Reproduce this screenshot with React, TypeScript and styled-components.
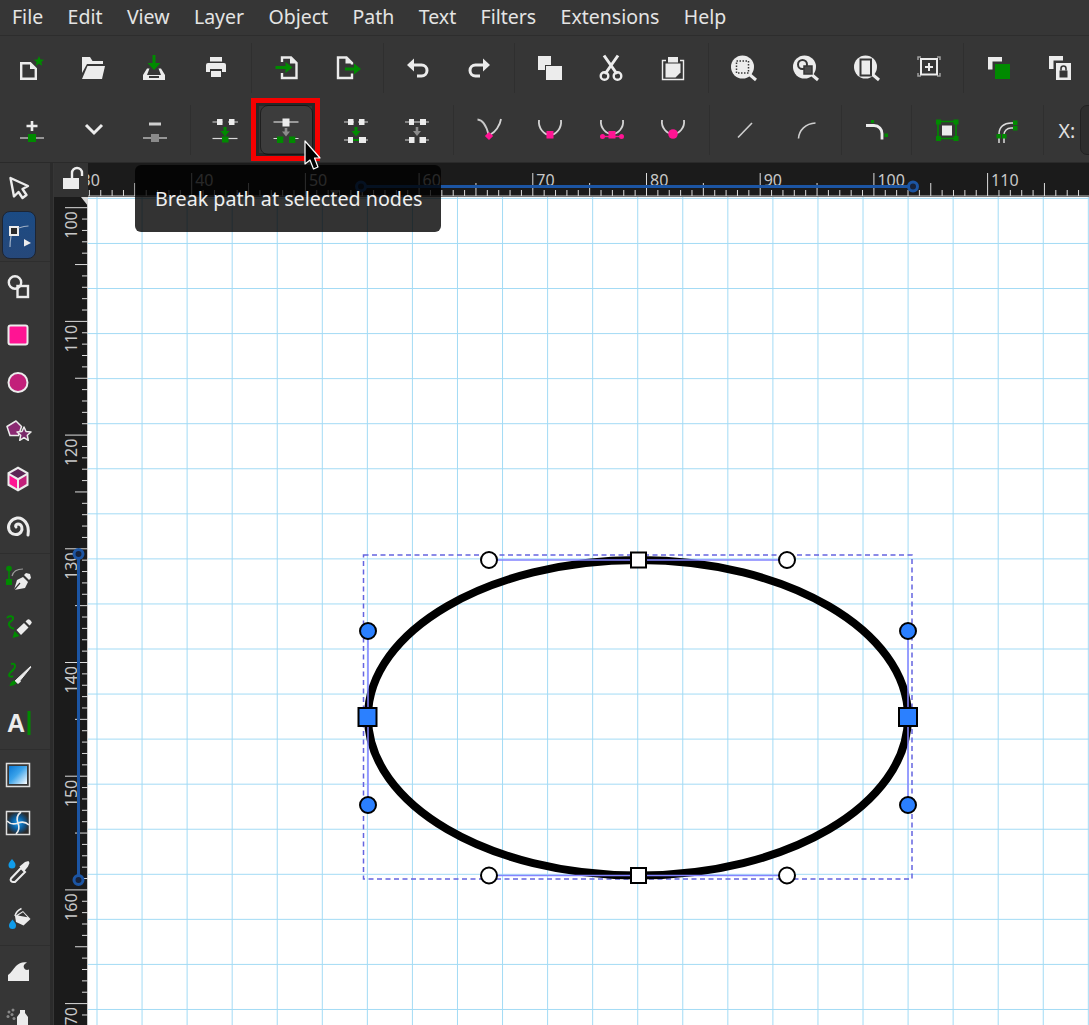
import React from "react";
import styled, { createGlobalStyle } from "styled-components";

const W = "#ececec";
const G = "#008a00";
const P = "#ff1493";

const GlobalStyle = createGlobalStyle`
  html, body {
    margin: 0;
    padding: 0;
    background: #363636;
    font-family: "Noto Sans", "Open Sans", sans-serif;
  }
`;

const Root = styled.div`
  position: relative;
  width: 1089px;
  height: 1025px;
  overflow: hidden;
  display: flex;
  flex-direction: column;
  background: #363636;
`;
const MenuBar = styled.div`
  display: flex;
  align-items: center;
  box-sizing: border-box;
  height: 36px;
  padding-bottom: 3px;
  border-bottom: 1px solid #2d2d2d;
`;
const MenuItem = styled.div`
  padding: 0 12.4px 0 12px;
  font-size: 19.5px;
  color: #e4e4e4;
  white-space: nowrap;
`;
const ToolRow = styled.div<{ $h: number; $pt?: number; $pl: number }>`
  display: flex;
  align-items: center;
  box-sizing: border-box;
  height: ${(p) => p.$h}px;
  padding-top: ${(p) => p.$pt ?? 0}px;
  padding-left: ${(p) => p.$pl}px;
  flex: none;
`;
const ToolButton = styled.div<{ $hover?: boolean }>`
  flex: none;
  display: flex;
  align-items: center;
  justify-content: center;
  box-sizing: border-box;
  width: 53.5px;
  height: 50px;
  margin: 0 4px;
  border-radius: 8px;
  border: 1px solid ${(p) => (p.$hover ? "#1f1f1f" : "transparent")};
  background: ${(p) => (p.$hover ? "#3c3c3c" : "transparent")};
`;
const Sep = styled.div<{ $w: number; $hidden?: boolean }>`
  flex: none;
  width: ${(p) => p.$w}px;
  height: 50px;
  display: flex;
  justify-content: center;
  &::after {
    content: "";
    width: 1px;
    height: 100%;
    background: ${(p) => (p.$hidden ? "transparent" : "#2f2f2f")};
  }
`;
const Glyph = styled.svg`
  display: block;
  width: 32px;
  height: 32px;
  flex: none;
  overflow: visible;
`;
const CoordLabel = styled.div`
  flex: none;
  font-size: 19.5px;
  color: #e0e0e0;
  margin-left: 11px;
  width: 21.5px;
`;
const CoordInput = styled.div`
  flex: none;
  box-sizing: border-box;
  width: 60px;
  height: 50px;
  border: 1px solid #222;
  border-radius: 7px;
  background: #2e2e2e;
`;
const Body = styled.div`
  flex: 1;
  min-height: 0;
  display: flex;
  border-top: 1px solid #2a2a2a;
`;
const ToolBox = styled.div`
  flex: none;
  width: 50px;
  display: flex;
  flex-direction: column;
  align-items: flex-end;
  border-right: 3px solid #2b2b2b;
  margin-right: 1px;
  overflow: hidden;
`;
const BoxButton = styled.div<{ $active?: boolean }>`
  flex: none;
  box-sizing: border-box;
  width: 34px;
  height: 48px;
  margin-right: 14px;
  display: flex;
  align-items: center;
  justify-content: center;
  border-radius: 8px;
  border: 1px solid ${(p) => (p.$active ? "#1d2533" : "transparent")};
  background: ${(p) => (p.$active ? "linear-gradient(#1b4b84, #26487a)" : "transparent")};
  svg {
    margin-left: -2px;
  }
`;
const BoxSep = styled.div`
  flex: none;
  width: 100%;
  height: 1px;
  margin: 1.5px 0;
  background: #2e2e2e;
`;
const Stage = styled.div`
  flex: 1;
  min-width: 0;
  display: grid;
  grid-template-columns: 34px 1fr;
  grid-template-rows: 34px 1fr;
`;
const LockCell = styled.div`
  background: #333;
  display: flex;
  align-items: center;
  justify-content: center;
`;
const Drawing = styled.svg`
  display: block;
  width: 100%;
  height: 100%;
`;
const RulerFrame = styled.div`
  background: #1b1b1b;
  overflow: hidden;
`;
const Canvas = styled.div`
  background: #fff;
  overflow: hidden;
`;
const RedBox = styled.div`
  position: absolute;
  left: 251px;
  top: 98px;
  width: 69px;
  height: 63px;
  box-sizing: border-box;
  border: 5px solid #f60000;
  box-shadow: inset 0 0 0 3px rgba(0, 0, 0, 0.25);
`;
const Tooltip = styled.div`
  position: absolute;
  left: 135px;
  top: 165px;
  width: 306px;
  height: 67px;
  box-sizing: border-box;
  padding-left: 20px;
  display: flex;
  align-items: center;
  border-radius: 6px;
  background: rgba(0, 0, 0, 0.8);
  color: #efefef;
  font-size: 19.7px;
  white-space: nowrap;
`;
const Cursor = styled.svg`
  position: absolute;
  left: 300px;
  top: 138px;
  width: 30px;
  height: 36px;
`;

const I = (p: { children: React.ReactNode }) => <Glyph viewBox="0 0 32 32">{p.children}</Glyph>;

const line = { fill: "none", stroke: W, strokeWidth: 2.4 } as const;

const topIcons = [
  <I>
    <path d="M6.2 11.2h9l5.6 5.6v10H6.2z" {...line} />
    <path d="M15 11v6h6z" fill={W} />
    <path d="M24 4l1.5 3.4 3.6.3-2.7 2.4.8 3.6-3.2-1.9-3.2 1.9.8-3.6-2.7-2.4 3.6-.3z" fill={G} />
  </I>,
  <I>
    <path d="M5 5h8l2.5 4H26v3H10l-5 9z" fill={W} />
    <path d="M10.5 14H28l-3 13H5z" fill={W} />
  </I>,
  <I>
    <path d="M14.5 3h3v9h-3z" fill={G} />
    <path d="M9.5 11h13L16 18z" fill={G} />
    <path d="M9 16.5h2.5L9 23h14l-2.5-6.5H23L27 23v5H5v-5z" fill={W} />
    <path d="M11 24h10v2H11z" fill="#363636" />
  </I>,
  <I>
    <path d="M10 5h12v4.5H10z" fill={W} />
    <path d="M8 11h16a2 2 0 0 1 2 2v7h-4v-3H10v3H6v-7a2 2 0 0 1 2-2z" fill={W} />
    <path d="M11 19h10v6H11z" fill={W} />
  </I>,
  <I>
    <path d="M11 10V5.5h9l5.5 5.5v15H11v-5" {...line} />
    <path d="M19 5v6.5h6.5z" fill={W} />
    <path d="M4.5 14h11v3h-11z" fill={G} />
    <path d="M14.5 10l7 5.5-7 5.5z" fill={G} />
  </I>,
  <I>
    <path d="M20 12.5V11l-5.5-5.5H6V26h14v-4.5" {...line} />
    <path d="M13.5 5v6.5H20z" fill={W} />
    <path d="M13 15.5h11v3H13z" fill={G} />
    <path d="M22 11.5l7 5.5-7 5.5z" fill={G} />
  </I>,
  <I>
    <path d="M9 13h10.5a5.5 5.5 0 0 1 0 11H15" fill="none" stroke={W} strokeWidth="3" />
    <path d="M12 6.5v13L5 13z" fill={W} />
  </I>,
  <I>
    <path d="M23 13H12.5a5.5 5.5 0 0 0 0 11H17" fill="none" stroke={W} strokeWidth="3" />
    <path d="M20 6.5v13l7-6.5z" fill={W} />
  </I>,
  <I>
    <path d="M4 4h13v9h-6v5H4z" fill={W} />
    <path d="M12 14h16v14H12z" fill={W} />
  </I>,
  <I>
    <path d="M9 3.5L22 22M23 3.5L10 22" stroke={W} strokeWidth="3" fill="none" />
    <circle cx="9.5" cy="24" r="3.8" {...line} />
    <circle cx="22.5" cy="24" r="3.8" {...line} />
  </I>,
  <I>
    <path d="M9 8.5H5.5v19h21v-19H23" fill="none" stroke={W} strokeWidth="1.4" />
    <path d="M11 5h10v5.5H11z" fill={W} />
    <path d="M8.5 11.5H23.5v9l-5 5h-10z" fill={W} />
  </I>,
  <I>
    <circle cx="14.5" cy="15" r="11.5" fill={W} />
    <path d="M21 22l7 6" stroke={W} strokeWidth="3" />
    <rect x="8.5" y="9" width="12" height="12" fill="none" stroke="#363636" strokeWidth="1.5" strokeDasharray="1.5 1.5" />
  </I>,
  <I>
    <circle cx="14.5" cy="15" r="11.5" fill={W} />
    <path d="M21 22l7 6" stroke={W} strokeWidth="3" />
    <circle cx="12.5" cy="12.5" r="4.5" fill={W} stroke="#363636" strokeWidth="2" />
    <rect x="14" y="14" width="8" height="8" fill="#4a4a4a" stroke="#363636" strokeWidth="1.5" />
  </I>,
  <I>
    <circle cx="14.5" cy="15" r="11.5" fill={W} />
    <path d="M21 22l7 6" stroke={W} strokeWidth="3" />
    <rect x="9.5" y="7.5" width="10.5" height="16" fill={W} stroke="#363636" strokeWidth="2" />
  </I>,
  <I>
    <path d="M8 8H5v3M24 8h3v3M8 27H5v-3M24 27h3v-3" transform="translate(0 -3)" fill="none" stroke="#a0a0a0" strokeWidth="1.5" />
    <rect x="8" y="7" width="16" height="15.5" fill="none" stroke={W} strokeWidth="2" />
    <path d="M12 15h8M16 11v8" stroke={W} strokeWidth="2" />
  </I>,
  <I>
    <path d="M6 5h14v4.5h-9.5v8H6z" fill={W} />
    <path d="M13 12h15v15H13z" fill={G} />
  </I>,
  <I>
    <path d="M5 4h14v4.5h-9.5V17H5z" fill={W} />
    <path d="M12 11h15v17H12z" fill={W} />
    <path d="M15.5 18.5h8v7h-8z" fill="#363636" />
    <path d="M17 18.5v-2a2.5 2.5 0 0 1 5 0v2" fill="none" stroke="#363636" strokeWidth="1.6" />
  </I>,
];

const thin = { fill: "none", stroke: "#d8d8d8", strokeWidth: 1.2 } as const;
const arc = { fill: "none", stroke: "#d4d4d4", strokeWidth: 1.8 } as const;
const cap = (x: number, y: number, w = 6, h = 6, c = W) => <rect x={x} y={y} width={w} height={h} fill={c} />;

const nodeIcons = [
  <I>
    <path d="M4 24h24" {...thin} />
    <path d="M16 7v10M10.5 12h11" stroke={W} strokeWidth="2.6" />
    {cap(12, 20, 8, 8, G)}
  </I>,
  <I>
    <path d="M8 11l8 8 8-8" fill="none" stroke={W} strokeWidth="3" />
  </I>,
  <I>
    <path d="M4 24h24" {...thin} />
    <path d="M10 10h12" stroke="#cfcfcf" strokeWidth="3" />
    {cap(12, 20, 8, 8, "#8a8a8a")}
  </I>,
  <I>
    <path d="M3.5 8h10M19 8h10" {...thin} />
    {cap(8, 5, 5.5, 6)}
    {cap(20, 5, 5.5, 6)}
    <path d="M16 13v5" stroke={G} strokeWidth="3" />
    <path d="M11.5 17h9L16 22.5z" fill={G} />
    <path d="M3.5 24.5h25" {...thin} />
    {cap(13, 22.5, 6.5, 6, G)}
  </I>,
  <I>
    <path d="M3.5 8h25" {...thin} />
    {cap(12.5, 4.5, 7, 8)}
    <path d="M16 14v5" stroke="#8c8c8c" strokeWidth="2.6" />
    <path d="M12 17.5h8l-4 5z" fill="#8c8c8c" />
    <path d="M3.5 24.5h9M19.5 24.5h9" {...thin} />
    {cap(7, 22.5, 6.3, 6.5, G)}
    {cap(19, 22.5, 6.3, 6.5, G)}
  </I>,
  <I>
    <path d="M4 8h10M18 8h10" {...thin} />
    {cap(8, 5, 5.5, 6)}
    {cap(19, 5, 5.5, 6)}
    <path d="M16 13v5" stroke={G} strokeWidth="3" />
    <path d="M11.5 17h9L16 22.5z" fill={G} />
    <path d="M4 26h4M24 26h4" {...thin} />
    {cap(8, 23, 5, 6)}
    {cap(19, 23, 7, 6)}
    <path d="M13 26h6" stroke={G} strokeWidth="2" />
  </I>,
  <I>
    <path d="M4 8h5M23 8h5" {...thin} />
    <path d="M13 8h7" stroke="#8c8c8c" strokeWidth="2" />
    {cap(8, 5, 5, 6)}
    {cap(19, 5, 6, 6)}
    <path d="M16 13v5" stroke="#8c8c8c" strokeWidth="2.6" />
    <path d="M12 17h8l-4 5z" fill="#8c8c8c" />
    <path d="M4 26h4M24 26h4" {...thin} />
    {cap(8, 23, 5.5, 6)}
    {cap(18.5, 23, 6.5, 6)}
  </I>,
  <I>
    <path d="M4.5 5.5c6 .5 9 7 11 15" {...arc} stroke="#c8c8c8" />
    <path d="M28 5c-1 7-6 13-10.5 15.5" {...arc} />
    <path d="M16 18l4.2 4-4.2 4-4.2-4z" fill={P} />
  </I>,
  <I>
    <path d="M5 6c-1 8 5 15 11 15s12-7 11-15" {...arc} />
    {cap(12.5, 17, 7, 7.5, P)}
  </I>,
  <I>
    <path d="M5 6c-1 8 5 14 11 14s12-6 11-14" {...arc} />
    <path d="M6 22.5h20" stroke={P} strokeWidth="1.4" />
    <circle cx="6.5" cy="22.5" r="2.5" fill={P} />
    <circle cx="25.5" cy="22.5" r="2.5" fill={P} />
    {cap(12.5, 17, 7, 7.5, P)}
  </I>,
  <I>
    <path d="M5 6c-1 8 5 14 11 14s12-6 11-14" {...arc} />
    <circle cx="16" cy="20" r="4.8" fill={P} />
  </I>,
  <I>
    <path d="M9 23.5L23 9" fill="none" stroke="#cfcfcf" strokeWidth="1.6" />
  </I>,
  <I>
    <path d="M8.5 24.5c.5-8 7-15 17-15.5" fill="none" stroke="#cfcfcf" strokeWidth="1.6" />
  </I>,
  <I>
    <path d="M6 11.5h8c5 0 8 4 8 8v6" fill="none" stroke={W} strokeWidth="2.8" />
    {cap(11, 6, 3, 3, G)}
    {cap(24.5, 19.5, 3.5, 3.5, G)}
  </I>,
  <I>
    <rect x="7" y="7.5" width="18" height="17" fill="none" stroke={G} strokeWidth="1.6" />
    {cap(5, 5.5, 5, 5, G)}
    {cap(22.5, 5.5, 5, 5, G)}
    {cap(5, 22, 5, 5, G)}
    {cap(22.5, 22, 5, 5, G)}
    {cap(11, 11.5, 10, 10)}
  </I>,
  <I>
    <path d="M6 29v-9c0-7 5-11 12-11h6M11 29v-8c0-4 3-7 7-7h6" fill="none" stroke="#dcdcdc" strokeWidth="1.5" />
    {cap(3.5, 20, 4.5, 4.5, G)}
    {cap(9, 20, 4.5, 4.5, G)}
    {cap(20, 6.5, 4.5, 4.5, G)}
    {cap(20, 12, 4.5, 4.5, G)}
  </I>,
];

const boxIcons: (React.ReactNode | null)[] = [
  <I>
    <path d="M8.5 7L26 15l-5.5 3 4 6-4 3-4-6-4.5 4.5z" fill="none" stroke={W} strokeWidth="2.4" strokeLinejoin="round" />
  </I>,
  <I>
    <rect x="8" y="8" width="8" height="8" fill="#2a2a2a" stroke={W} strokeWidth="2" />
    <path d="M8 28c0-5 .5-8 1-11M16.5 9c3-1 6-2 10-2" fill="none" stroke="#9fb0c6" strokeWidth="1.2" />
    <path d="M22 20l7 4-7 3.5z" fill={W} />
  </I>,
  null,
  <I>
    <circle cx="13" cy="11.5" r="6.2" fill="none" stroke={W} strokeWidth="2.4" />
    <rect x="15.5" y="15" width="10.5" height="11" fill="none" stroke={W} strokeWidth="2.4" />
  </I>,
  <I>
    <rect x="6.5" y="6.5" width="19" height="19" rx="2" fill={P} stroke={W} strokeWidth="2" />
  </I>,
  <I>
    <circle cx="16" cy="15.5" r="9.5" fill="#c2207a" stroke={W} strokeWidth="2" />
  </I>,
  <I>
    <path d="M5 11.5L14 6l5.5 5.5-3 9H8z" fill="#8a2a72" stroke={W} strokeWidth="1.5" strokeLinejoin="round" />
    <path d="M22 12l2 4.5 5 .5-3.7 3.3 1 5-4.3-2.7-4.3 2.7 1-5-3.7-3.3 5-.5z" fill="#7a2a6a" stroke={W} strokeWidth="1.5" strokeLinejoin="round" />
  </I>,
  <I>
    <path d="M16 3.5l10.5 6v13L16 28.5 5.5 22.5v-13z" fill={W} />
    <path d="M16 6l8 4.5-8 4.5-8-4.5z" fill="#5c2555" />
    <path d="M7.5 12.5l7.5 4.5v8.5l-7.5-4.5z" fill={P} />
    <path d="M24.5 12.5L17 17v8.5l7.5-4.5z" fill="#c2207a" />
  </I>,
  <I>
    <path d="M26 24C28 13 21 6 15 7C9 8 5 14 7 19C9 24 16 25 19 21C21 18 20 13 16 13C14 13 13 15 14 16" fill="none" stroke={W} strokeWidth="3" strokeLinecap="round" />
  </I>,
  null,
  <I>
    <circle cx="7" cy="5.5" r="2.8" fill={G} />
    <rect x="4" y="16" width="6" height="6" fill={G} />
    <path d="M7 7v10" stroke={G} strokeWidth="1.5" />
    <path d="M10 13c1-4 5-7 11-7" fill="none" stroke="#9a9a9a" strokeWidth="1.2" />
    <path d="M12 27l3-10 6-3 5 5-3 6z" fill={W} />
    <path d="M22 12l2-2 4 1 1 4-2 2z" fill={W} />
    <path d="M12 27l6-7" stroke="#363636" strokeWidth="1.2" />
  </I>,
  <I>
    <path d="M5 7c2-3 7-2 6 1-1 3-5 2-4 6 1 3 3 3 5 4" fill="none" stroke={G} strokeWidth="2" />
    <path d="M14.5 19L22 12l4.5 4.5L19 24z" fill={W} />
    <path d="M23.5 10.5l1.5-1.5a2 2 0 0 1 3 0l1 1a2 2 0 0 1 0 3l-1.5 1.5z" fill={W} />
    <path d="M10.5 27l2-7 5 5z" fill={G} />
  </I>,
  <I>
    <path d="M9 5c5-1 5 3 2 6-2 2-4 3-4 5 0 2 3 2 4 1" fill="none" stroke={G} strokeWidth="2" />
    <path d="M13 22L28.5 7.5l.5.5L16 24z" fill={W} stroke={W} />
    <path d="M16 19.5l3 3-3 2.5-3-3z" fill={W} />
    <path d="M7.5 27c1-4 3-5.5 5-5.5l2 2.5c-1.5 2-4 3-7 3z" fill={G} />
  </I>,
  <I>
    <text x="5" y="25" fontFamily="'Liberation Sans', sans-serif" fontWeight="700" fontSize="25" fill={W}>A</text>
    <rect x="25.5" y="4" width="3" height="24" fill={G} />
  </I>,
  null,
  <I>
    <defs>
      <linearGradient id="grad" x1="0" y1="0" x2="1" y2="1">
        <stop offset="0" stopColor="#0a78d6" />
        <stop offset="0.45" stopColor="#3ba3ea" />
        <stop offset="1" stopColor="#ffffff" />
      </linearGradient>
    </defs>
    <rect x="4.5" y="4.5" width="23" height="23" fill="none" stroke="#dddddd" strokeWidth="1.5" />
    <rect x="7" y="7" width="18" height="18" fill="url(#grad)" />
  </I>,
  <I>
    <defs>
      <radialGradient id="mesh">
        <stop offset="0" stopColor="#19a0f5" />
        <stop offset="0.55" stopColor="#0b5a98" />
        <stop offset="1" stopColor="#2b2b2b" />
      </radialGradient>
    </defs>
    <rect x="4.5" y="4.5" width="23" height="23" fill="url(#mesh)" stroke="#dddddd" strokeWidth="1.5" />
    <path d="M16 16C14 11 15 8 19 5M16 16C21 14 24 15 27 18M16 16C18 21 17 24 14 27M16 16C11 18 8 17 5 14" fill="none" stroke={W} strokeWidth="1.6" />
  </I>,
  <I>
    <path d="M10 4c2.5 3 3.5 4.5 3.5 6a3.5 3.5 0 0 1-7 0c0-1.5 1-3 3.5-6z" fill="#109cea" />
    <path d="M11 27c-2 0-3-2-2-3.5L19 13l4 4-10 10z" fill="none" stroke={W} strokeWidth="2" />
    <path d="M17.5 11.5L23 7l3.5-1 1 2-1.5 3.5-4 5z" fill={W} />
  </I>,
  <I>
    <path d="M10.5 16.5c2.5 3 3.5 4.5 3.5 6a3.5 3.5 0 0 1-7 0c0-1.5 1-3 3.5-6z" fill="#109cea" />
    <path d="M13 13l8-5 7.5 8-7 6.5L14 19z" fill={W} />
    <path d="M13 13c1-4 3-6 6.5-7.5" fill="none" stroke={W} strokeWidth="1.6" />
    <path d="M16 12.5l5-3.3 4.5 5z" fill="#363636" />
  </I>,
  null,
  <I>
    <path d="M6 26V20C9 18 11 14 14 11C17 8 21 6.5 25 7.5C22 9 21 11 22 13C23 15 25 15.5 27 14.5V26Z" fill={W} />
  </I>,
  <I>
    <circle cx="7" cy="9" r="1.5" fill="#888" />
    <circle cx="11" cy="7" r="1.5" fill="#888" />
    <circle cx="10" cy="11.5" r="1.5" fill="#888" />
    <circle cx="6" cy="13.5" r="1.5" fill="#888" />
    <circle cx="12" cy="15.5" r="1.5" fill="#888" />
    <path d="M18 7h5v3l3 4v16H15V14l3-4z" fill={W} />
  </I>,
];

const RULER_X = (u: number) => 191.7 + (u - 40) * 11.37;
const RULER_Y = (u: number) => 207.7 + (u - 100) * 11.37;
const range = (a: number, b: number) => Array.from({ length: b - a + 1 }, (_, i) => a + i);
const tickLen = (u: number) => (u % 10 === 0 ? 23 : u % 5 === 0 ? 13 : 6);
const GUIDE = "#1c55a3";

const HRuler = () => (
  <Drawing viewBox="88 163 1001 34" preserveAspectRatio="none">
    <path d="M88 196h1001" stroke="#c8c8c8" strokeWidth="1" />
    {range(30, 125).map((u) => (
      <g key={u}>
        <path d={`M${RULER_X(u)} 196v-${tickLen(u)}`} stroke="#dcdcdc" strokeWidth="1" />
        {u % 10 === 0 && (
          <text x={RULER_X(u) + 3.5} y="185.5" fontFamily="'Noto Sans', sans-serif" fontSize="16" fill="#c8c8c8">
            {u}
          </text>
        )}
      </g>
    ))}
    <path d="M330 190h10l-5 7z" fill="#8a8a8a" />
    <path d="M361 186.5H913" stroke={GUIDE} strokeWidth="3" />
    <circle cx="361" cy="186.5" r="4.5" fill="#18233a" stroke={GUIDE} strokeWidth="3" />
    <circle cx="913" cy="186.5" r="4.5" fill="#18233a" stroke={GUIDE} strokeWidth="3" />
  </Drawing>
);

const VRuler = () => (
  <Drawing viewBox="54 197 34 828" preserveAspectRatio="none">
    <path d="M87.5 197v828" stroke="#c8c8c8" strokeWidth="1" />
    {range(99, 175).map((u) => (
      <g key={u}>
        <path d={`M88 ${RULER_Y(u)}h-${tickLen(u)}`} stroke="#dcdcdc" strokeWidth="1" />
        {u % 10 === 0 && (
          <text
            transform={`translate(76.5 ${RULER_Y(u) + 31}) rotate(-90)`}
            fontFamily="'Noto Sans', sans-serif"
            fontSize="16"
            fill="#c8c8c8"
          >
            {u}
          </text>
        )}
      </g>
    ))}
    <path d="M88 197v9l-7-9z" fill="#d8d8d8" />
    <path d="M78.5 554V880" stroke={GUIDE} strokeWidth="3" />
    <circle cx="78.5" cy="554" r="4.5" fill="#18233a" stroke={GUIDE} strokeWidth="3" />
    <circle cx="78.5" cy="880" r="4.5" fill="#18233a" stroke={GUIDE} strokeWidth="3" />
  </Drawing>
);

const ELLIPSE = "M368 717C368 631 489 560 638.5 560C787 560 908 631 908 717C908 805 787 875.5 638.5 875.5C489 875.5 368 805 368 717Z";

const Square = ({ x, y, s, fill }: { x: number; y: number; s: number; fill: string }) => (
  <rect x={x - s / 2} y={y - s / 2} width={s} height={s} fill={fill} stroke="#000" strokeWidth="2" />
);
const Knob = ({ x, y, fill }: { x: number; y: number; fill: string }) => (
  <circle cx={x} cy={y} r="8" fill={fill} stroke="#000" strokeWidth="2" />
);

const Scene = () => (
  <Drawing viewBox="88 197 1001 828" preserveAspectRatio="none">
    {range(0, 22).map((i) => (
      <path key={`v${i}`} d={`M${97 + i * 45.06} 197v828`} stroke="#a3dbf5" strokeWidth="1" />
    ))}
    {range(0, 18).map((i) => (
      <path key={`h${i}`} d={`M88 ${198.4 + i * 45.06}h1001`} stroke="#a3dbf5" strokeWidth="1" />
    ))}
    <rect x="363.5" y="555" width="548.5" height="324" fill="none" stroke="#6464e0" strokeWidth="1.5" strokeDasharray="5 3.5" />
    <path d={ELLIPSE} fill="none" stroke="#000" strokeWidth="8" />
    <path d="M489 560H787M489 875.5H787M368 631V805M908 631V805" stroke="#8484ff" strokeWidth="1.5" fill="none" />
    <Knob x={489} y={560} fill="#fff" />
    <Knob x={787} y={560} fill="#fff" />
    <Knob x={489} y={875.5} fill="#fff" />
    <Knob x={787} y={875.5} fill="#fff" />
    <Knob x={368} y={631} fill="#2b80ff" />
    <Knob x={368} y={805} fill="#2b80ff" />
    <Knob x={908} y={631} fill="#2b80ff" />
    <Knob x={908} y={805} fill="#2b80ff" />
    <Square x={638.5} y={560} s={15} fill="#fff" />
    <Square x={638.5} y={875.5} s={15} fill="#fff" />
    <Square x={367.5} y={717} s={18} fill="#2b80ff" />
    <Square x={908} y={717} s={18} fill="#2b80ff" />
  </Drawing>
);

const MENUS = ["File", "Edit", "View", "Layer", "Object", "Path", "Text", "Filters", "Extensions", "Help"];

// separators after these icon indexes, with their width
const TOP_SEPS: Record<number, number> = { 3: 9.5, 5: 8, 7: 9, 10: 10, 14: 8 };
const NODE_SEPS: Record<number, number> = { 2: 8, 6: 10, 10: 10, 12: 8, 13: 10, 15: 8 };

export default function App() {
  return (
    <Root>
      <GlobalStyle />
      <MenuBar>
        {MENUS.map((m) => (
          <MenuItem key={m}>{m}</MenuItem>
        ))}
      </MenuBar>
      <ToolRow $h={62} $pt={2} $pl={0.5}>
        {topIcons.map((icon, i) => (
          <React.Fragment key={i}>
            <ToolButton>{icon}</ToolButton>
            {TOP_SEPS[i] && <Sep $w={TOP_SEPS[i]} />}
          </React.Fragment>
        ))}
      </ToolRow>
      <ToolRow $h={64} $pl={1.5}>
        {nodeIcons.map((icon, i) => (
          <React.Fragment key={i}>
            <ToolButton $hover={i === 4}>{icon}</ToolButton>
            {i === 4 && <Sep $w={8} $hidden />}
            {NODE_SEPS[i] && <Sep $w={NODE_SEPS[i]} />}
          </React.Fragment>
        ))}
        <CoordLabel>X:</CoordLabel>
        <CoordInput />
      </ToolRow>
      <Body>
        <ToolBox>
          {boxIcons.map((icon, i) =>
            icon ? (
              <BoxButton key={i} $active={i === 1}>
                {icon}
              </BoxButton>
            ) : (
              <BoxSep key={i} />
            )
          )}
        </ToolBox>
        <Stage>
          <LockCell>
            <Glyph viewBox="0 0 32 32">
              <path d="M8 14h16v11H8z" fill={W} />
              <path d="M17 14V9a5 5 0 0 1 10 0v3" fill="none" stroke={W} strokeWidth="2.4" />
            </Glyph>
          </LockCell>
          <RulerFrame>
            <HRuler />
          </RulerFrame>
          <RulerFrame>
            <VRuler />
          </RulerFrame>
          <Canvas>
            <Scene />
          </Canvas>
        </Stage>
      </Body>
      <RedBox />
      <Tooltip>Break path at selected nodes</Tooltip>
      <Cursor viewBox="0 0 30 36">
        <path d="M5 3V26L10 22L13.5 31L18 29L14.5 20L20 20Z" fill="#000" stroke="#fff" strokeWidth="1.2" strokeLinejoin="round" />
      </Cursor>
    </Root>
  );
}
